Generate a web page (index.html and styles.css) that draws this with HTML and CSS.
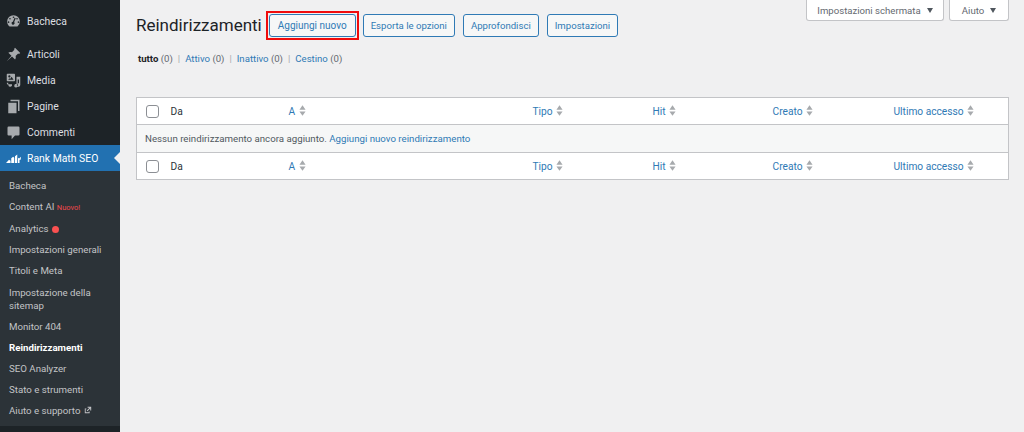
FILE: index.html
```html
<!DOCTYPE html>
<html lang="it">
<head>
<meta charset="utf-8">
<title>Reindirizzamenti</title>
<link rel="stylesheet" href="styles.css">
</head>
<body>
<div class="layout">
  <aside class="sidebar">
    <nav class="menu">
      <a class="item first"><svg class="ico" viewBox="0 0 20 20"><path fill-rule="evenodd" d="M10 1.500a8.500 8.500 0 0 0-8.500 8.500c0 2.700 1.200 5.100 3.200 6.700h10.600a8.500 8.500 0 0 0 3.200-6.700A8.500 8.500 0 0 0 10 1.500zm0 1.700a1.100 1.100 0 1 1 0 2.200 1.100 1.100 0 0 1 0-2.200zM5.300 5.200a1.100 1.100 0 1 1 0 2.200 1.100 1.100 0 0 1 0-2.200zm9.400 0a1.100 1.100 0 1 1 0 2.200 1.100 1.100 0 0 1 0-2.200zM3.400 9.800a1.100 1.100 0 1 1 0 2.200 1.100 1.100 0 0 1 0-2.200zm13.200 0a1.100 1.100 0 1 1 0 2.200 1.100 1.100 0 0 1 0-2.200zM13 5.800l-2.100 5a2 2 0 1 1-1.700-.6l2.300-5.100z"/></svg>Bacheca</a>
      <a class="item second"><svg class="ico" viewBox="0 0 20 20"><path d="M12 1 19 8l-1.700 1.200-1.100-.5-3.400 3.300c.6 1.800.2 3.500-.7 4.700L8 12.500 1 19l6.300-7.200-4.200-4.200c1.300-.9 3-1.200 4.800-.6l3.300-3.400-.4-1.100z"/></svg>Articoli</a>
      <a class="item"><svg class="ico" viewBox="0 0 20 20"><path fill-rule="evenodd" d="M2 1h9a1 1 0 0 1 1 1v8a1 1 0 0 1-1 1H2a1 1 0 0 1-1-1V2a1 1 0 0 1 1-1zm2.500 2a1.500 1.500 0 1 0 0 3 1.500 1.500 0 0 0 0-3zM10 9 7.500 5 5.500 8 4.500 7 3 9zM14 5h5v11a2.300 2.300 0 1 1-1.700-2.200V8.500h-1.700V17a2.300 2.300 0 1 1-1.600-2.200zM1 13h2v2h5a2.500 2.500 0 1 1-4.900.700 2.500 2.500 0 0 1-2.100-2.700z"/></svg>Media</a>
      <a class="item"><svg class="ico" viewBox="0 0 20 20"><path d="M6 1h12v15h-2V3H6zM3 5h11v14H3z"/></svg>Pagine</a>
      <a class="item"><svg class="ico" viewBox="0 0 20 20"><path d="M3.500 2h13A1.500 1.500 0 0 1 18 3.500v9a1.500 1.500 0 0 1-1.500 1.500H12l-4.500 5v-5h-4A1.500 1.500 0 0 1 2 12.500v-9A1.500 1.500 0 0 1 3.500 2z"/></svg>Commenti</a>
      <a class="item active"><svg class="ico" viewBox="0 0 20 20"><path d="M0 16l4-4.500L6 13v3zM7 16V9.500L9.500 7.500 11 9v7zM12 16V7l3-2.500V16zM16 16V9l1.500 1 2.500-2.500-.5 4h-1.500V16z"/></svg>Rank Math SEO</a>
    </nav>
    <nav class="submenu">
      <a>Bacheca</a>
      <a>Content AI <span class="new">Nuovo!</span></a>
      <a>Analytics <span class="dot"></span></a>
      <a>Impostazioni generali</a>
      <a>Titoli e Meta</a>
      <a>Impostazione della sitemap</a>
      <a>Monitor 404</a>
      <a class="current">Reindirizzamenti</a>
      <a>SEO Analyzer</a>
      <a>Stato e strumenti</a>
      <a>Aiuto e supporto <svg class="ext" viewBox="0 0 10 10"><path d="M4.500 1h4.500v4.500H7.800V3.100L4.300 6.600 3.400 5.700 6.900 2.200H4.500zM1 3h2v1.100H2.100v3.800h3.800V7H7v2H1z"/></svg></a>
    </nav>
  </aside>
  <main class="content">
    <div class="tabs">
      <button class="tab tab-wide">Impostazioni schermata <i class="caret"></i></button>
      <button class="tab">Aiuto <i class="caret"></i></button>
    </div>
    <header class="heading">
      <h1>Reindirizzamenti</h1>
      <span class="marked"><a class="btn">Aggiungi nuovo</a></span>
      <a class="btn">Esporta le opzioni</a>
      <a class="btn">Approfondisci</a>
      <a class="btn">Impostazioni</a>
    </header>
    <ul class="views">
      <li><b>tutto</b> <span>(0)</span></li>
      <li><a>Attivo</a> <span>(0)</span></li>
      <li><a>Inattivo</a> <span>(0)</span></li>
      <li><a>Cestino</a> <span>(0)</span></li>
    </ul>
    <table class="list">
      <colgroup>
        <col class="c-check"><col class="c-da"><col class="c-a"><col class="c-tipo"><col class="c-hit"><col class="c-creato"><col>
      </colgroup>
      <thead>
        <tr>
          <th><span class="check"></span></th>
          <th class="plain">Da</th>
          <th>A <svg class="sort" viewBox="0 0 8 12"><path d="M4 0l3.500 5H.5zM4 12 .5 7h7z"/></svg></th>
          <th>Tipo <svg class="sort" viewBox="0 0 8 12"><path d="M4 0l3.500 5H.5zM4 12 .5 7h7z"/></svg></th>
          <th>Hit <svg class="sort" viewBox="0 0 8 12"><path d="M4 0l3.500 5H.5zM4 12 .5 7h7z"/></svg></th>
          <th>Creato <svg class="sort" viewBox="0 0 8 12"><path d="M4 0l3.500 5H.5zM4 12 .5 7h7z"/></svg></th>
          <th>Ultimo accesso <svg class="sort" viewBox="0 0 8 12"><path d="M4 0l3.500 5H.5zM4 12 .5 7h7z"/></svg></th>
        </tr>
      </thead>
      <tbody>
        <tr><td colspan="7">Nessun reindirizzamento ancora aggiunto. <a>Aggiungi nuovo reindirizzamento</a></td></tr>
      </tbody>
      <tfoot>
        <tr>
          <th><span class="check"></span></th>
          <th class="plain">Da</th>
          <th>A <svg class="sort" viewBox="0 0 8 12"><path d="M4 0l3.500 5H.5zM4 12 .5 7h7z"/></svg></th>
          <th>Tipo <svg class="sort" viewBox="0 0 8 12"><path d="M4 0l3.500 5H.5zM4 12 .5 7h7z"/></svg></th>
          <th>Hit <svg class="sort" viewBox="0 0 8 12"><path d="M4 0l3.500 5H.5zM4 12 .5 7h7z"/></svg></th>
          <th>Creato <svg class="sort" viewBox="0 0 8 12"><path d="M4 0l3.500 5H.5zM4 12 .5 7h7z"/></svg></th>
          <th>Ultimo accesso <svg class="sort" viewBox="0 0 8 12"><path d="M4 0l3.500 5H.5zM4 12 .5 7h7z"/></svg></th>
        </tr>
      </tfoot>
    </table>
  </main>
</div>
</body>
</html>
```

FILE: styles.css
```css
* { box-sizing: border-box; }
html, body { margin: 0; height: 432px; overflow: hidden; }
body {
  background: #f0f0f1;
  color: #3c434a;
  font-family: Roboto, "Noto Sans", sans-serif;
  font-size: 10px;
}
.layout { display: flex; height: 432px; }
.sidebar { width: 120px; flex: none; background: #1d2327; color: #f0f0f1; }
.menu { display: flex; flex-direction: column; padding-top: 8px; }
.item {
  display: flex; align-items: center; gap: 6px;
  height: 26px; padding-left: 6px;
  font-size: 10.400px; color: #dcdfe1;
}
.first { margin-bottom: 7px; }
.ico { width: 15px; height: 15px; fill: #a7aaad; flex: none; }
.active { background: #2271b1; color: #fff; position: relative; }
.active .ico { fill: #fff; }
.active::after {
  content: ""; position: absolute; right: 0; top: 7px;
  border: 6px solid transparent; border-right-color: #f0f0f1; border-left: 0;
}
.submenu {
  display: flex; flex-direction: column; background: #2c3338;
  padding: 4px 0 5px;
}
.submenu a {
  display: block; padding: 4.050px 8px 4.050px 9px; line-height: 13px;
  font-size: 9.700px; color: #c3c4c7;
}
.submenu a.current { color: #fff; font-weight: 700; }
.new { color: #f0484c; font-size: 7.500px; }
.dot { display: inline-block; width: 7px; height: 7px; border-radius: 50%; background: #fa5151; margin-left: 1px; vertical-align: -0.500px; }
.ext { width: 8px; height: 8px; fill: #c3c4c7; vertical-align: -0.500px; margin-left: 1px; }

.content { flex: 1; min-width: 0; padding-left: 16px; padding-right: 15px; position: relative; }
.tabs { position: absolute; top: 0; right: 15px; display: flex; gap: 5px; }
.tab {
  height: 21px; width: 138px; padding: 0; background: #fff; border: 1px solid #c3c4c7; border-top: 0;
  border-radius: 0 0 3px 3px; font: inherit; font-size: 9.600px; color: #646970;
  display: flex; align-items: center; justify-content: center; gap: 6px;
}
.tab + .tab { width: 60px; }
.caret { border: 3px solid transparent; border-top: 5px solid #50575e; border-bottom: 0; }
.heading { display: flex; align-items: center; gap: 8px; padding-top: 14px; height: 37px; }
h1 { margin: 0; font-size: 17px; font-weight: 400; color: #1d2327; line-height: 23px; white-space: nowrap; }
.btn {
  display: inline-block; height: 23px; line-height: 21px; padding: 0 7px;
  border: 1px solid #2f7ab5; border-radius: 3px; background: #f6f7f7;
  color: #2f7ab5; font-size: 9.600px; white-space: nowrap;
}
.marked { border: 2px solid #f00c0c; padding: 1px; display: inline-flex; margin: 0 -4px 0 -4px; }
.marked .btn { font-size: 10px; padding: 0 8px; }
.views { list-style: none; margin: 14px 0 0; padding: 0 0 0 2px; display: flex; height: 15px; line-height: 15px; font-size: 9.600px; color: #646970; }
.views li + li::before { content: "|"; color: #a7aaad; margin: 0 5px; }
.views b { color: #1d2327; }
.views a { color: #2f7ab5; }
.list {
  margin-top: 31px; width: 873px; table-layout: fixed; border-collapse: collapse;
  background: #fff; border: 1px solid #c3c4c7;
}
.c-check { width: 26px; }
.c-da { width: 118px; }
.c-a { width: 244px; }
.c-tipo, .c-hit { width: 120px; }
.c-creato { width: 121px; }
.list th {
  height: 27px; padding: 0 0 0 8px; text-align: left; font-weight: 400;
  font-size: 10.200px; color: #2f7ab5; background: #fff;
}
.list th.plain { color: #2c3338; }
.list thead tr { border-bottom: 1px solid #c3c4c7; }
.list tfoot tr { border-top: 1px solid #c3c4c7; }
.list td { height: 28px; padding: 0 8px; background: #f6f7f7; font-size: 9.700px; color: #50575e; }
.list td a { color: #2f7ab5; }
.check { display: block; width: 13px; height: 13px; margin-left: 1px; border: 1px solid #8c8f94; border-radius: 3px; background: #fff; }
.sort { width: 7px; height: 11px; fill: #a7aaad; vertical-align: -1.500px; margin-left: 1px; }
```
